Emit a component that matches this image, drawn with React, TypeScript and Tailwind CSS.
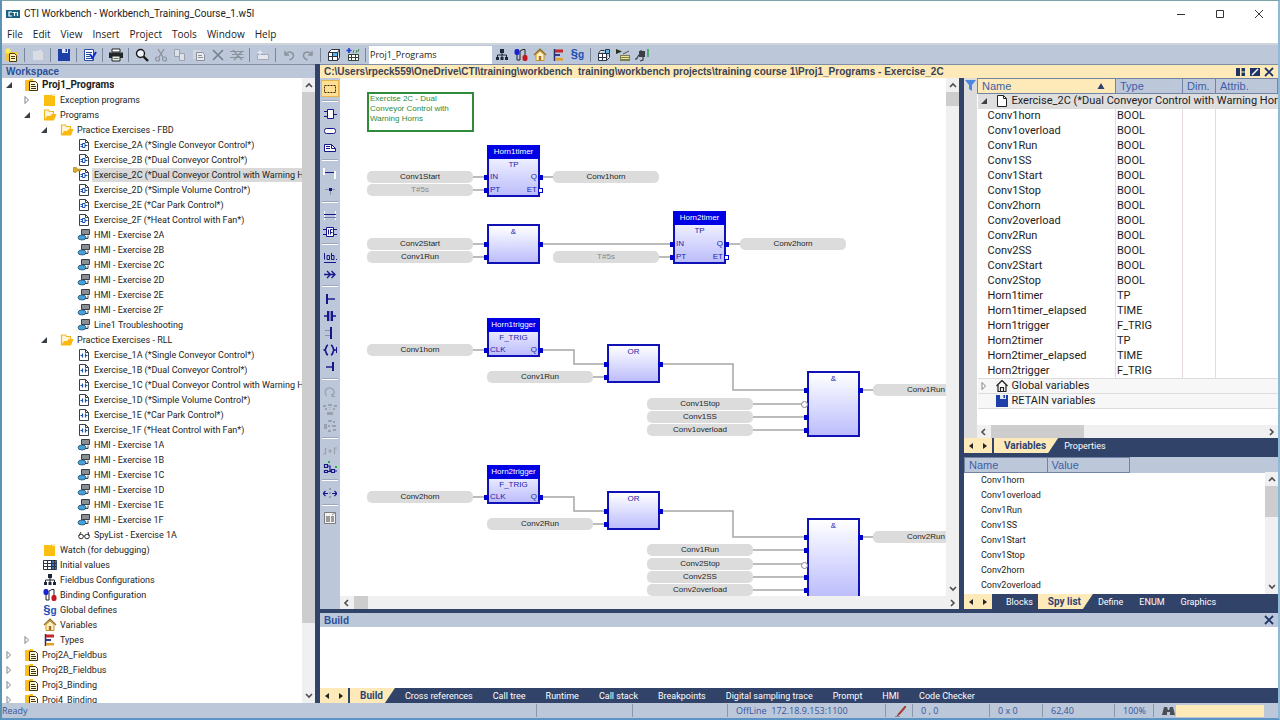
import React from "react";

type Kids = { children: React.ReactNode };

function Ico({ children, w = 14, h = 14 }: Kids & { w?: number; h?: number }) {
  return (
    <svg width={w} height={h} viewBox={`0 0 ${w} ${h}`} fill="none" aria-hidden="true" className="block shrink-0">
      {children}
    </svg>
  );
}

/* ---------- shared icons ---------- */
const FolderClosed = () => (
  <Ico><path d="M1 2h7l1-1h2v1h1v11H1z" fill="#fbbf12" /><path d="M9 1h3v2H9z" fill="#fde9a8" /></Ico>
);
const FolderOpen = () => (
  <Ico><path d="M1.5 12V2h4l1 1.5h4V6" stroke="#f3b61f" strokeWidth="1.2" fill="#fff6d8" /><path d="M1 12.5 4 8h3l2-2h4.5L11 12.5z" fill="#fbb80f" /></Ico>
);
const ProjectIcon = () => (
  <Ico>
    <path d="M0 2h4l1-1h3v2h1v10H0z" fill="#fbc01c" />
    <path d="M4.5 3.5h6l2 2v7h-8z" fill="#fff8e0" stroke="#3d3413" />
    <path d="M6 6.500h4M6 8.500h5M6 10.500h5" stroke="#3d3413" />
  </Ico>
);
const NewProjectIcon = () => (
  <Ico>
    <path d="M1 4h11v9H1z" fill="#f6c433" />
    <path d="M4.500 5.500h5l2 2v6h-7z" fill="#fff3c4" stroke="#4a3b05" />
    <path d="M6 8.500h4M6 10.500h4" stroke="#4a3b05" />
    <path d="M3 0v6M0 3h6M1 1l4 4M5 1 1 5" stroke="#fff04a" strokeWidth="1.200" />
  </Ico>
);
const Page = ({ children }: Kids) => (
  <Ico><path d="M2.500 1.500h6l3 3v8h-9z" fill="#fff" stroke="#3a4048" /><path d="M8.500 1.500v3h3" stroke="#3a4048" />{children}</Ico>
);
const FbdIcon = () => (
  <Page><path d="M5.500 5.500h2.500v4H5.500zM3.500 6.500h2M3.500 8.500h2M8 7.500h2.500" stroke="#1b4fae" /></Page>
);
const RllIcon = () => (
  <Page><path d="M3.500 7.500h2M5.500 5.500v4M8.500 5.500v4M8.500 7.500h2" stroke="#1b4fae" strokeWidth="1.200" /></Page>
);
const OpenFbdIcon = () => (
  <div className="relative">
    <FbdIcon />
    <svg width="8" height="6" viewBox="0 0 8 6" className="absolute -top-px -left-1" aria-hidden="true">
      <path d="M0 2a2 2 0 0 1 4 0h4v2H4a2 2 0 0 1-4-1z" fill="#d8ac2a" stroke="#8e6d12" strokeWidth=".5" />
    </svg>
  </div>
);
const HmiIcon = () => (
  <Ico>
    <path d="M4.500 1.500h8v5h-8z" fill="#8b8f93" stroke="#3c3f42" />
    <ellipse cx="5" cy="9.500" rx="4" ry="2.500" fill="#49a0d8" stroke="#1f5277" strokeWidth=".8" />
    <path d="M8 10.500h3V7.500" stroke="#3c3f42" />
  </Ico>
);
const GlassesIcon = () => (
  <Ico><circle cx="4" cy="8.500" r="2.300" stroke="#333" /><circle cx="10" cy="8.500" r="2.300" stroke="#333" /><path d="M6.200 8h1.600M1.800 8 4 4M12.200 8 11 4" stroke="#333" /></Ico>
);
const GridIcon = () => (
  <Ico>
    <path d="M.5 2.500h13v9H.500z" fill="#fff" stroke="#2b3340" />
    <path d="M8 3h5.500v8H8z" fill="#3b78c4" />
    <path d="M.5 5.500h13M.5 8.500h13M4.500 2.500v9M8.500 2.500v9M11.500 2.500v9" stroke="#2b3340" />
  </Ico>
);
const NetIcon = () => (
  <Ico><path d="M5 1h4v4H5zM1 9h3v3H1zM5.500 9h3v3h-3zM10 9h3v3h-3z" fill="#1d2736" /><path d="M7 5v4M2.500 9V7h9v2" stroke="#1d2736" /></Ico>
);
const BindIcon = () => (
  <Ico><path d="M3 6v6h3M6 12V3l3-1.500h2V8" stroke="#222" /><rect x=".5" y="1" width="5" height="6" rx="2" fill="#1a22d0" /><rect x="8.500" y="7" width="5" height="6" rx="2" fill="#c4161c" /></Ico>
);
const DefIcon = () => (
  <span aria-hidden="true" className="flex items-baseline font-['Liberation_Sans',sans-serif] text-[13px] leading-[14px] font-bold text-[#1c4fb4]">
    §<span className="text-[10px]">g</span>
  </span>
);
const HomeIcon = () => (
  <Ico><path d="M1 7 7 1.200 13 7" stroke="#8a6a1c" strokeWidth="1.300" /><path d="M3 6.500 7 3l4 3.500v6H3z" fill="#fff0bd" stroke="#c9952a" /><path d="M5.800 8h2.400v4.500H5.800z" fill="#a6712a" /></Ico>
);
const TypesIcon = () => (
  <Ico><path d="M2.500 1v12" stroke="#2a2f6b" strokeWidth="1.500" /><path d="M3 1.500h8v3H3z" fill="#c1272d" /><path d="M3 6h5v2H3z" fill="#3a3a8c" /><path d="M3 10h8v2.500H3z" fill="#e0a02a" /></Ico>
);
const FloppyIcon = () => (
  <Ico><path d="M1 1h12v12H1z" fill="#1f3fa8" /><path d="M5 1h6v4H5z" fill="#dfe6f5" /><path d="M8.500 1h1.500v3H8.500z" fill="#1f3fa8" /></Ico>
);

/* ---------- toolbar ---------- */
const gray = "#8c929c";
const toolbar: (null | [string, React.ReactNode])[] = [
  ["New project", <NewProjectIcon />],
  null,
  ["Open", <Ico><path d="M2 3h5l1-1h3v2h1v8H2z" fill="#d9dde3" /></Ico>],
  null,
  ["Save", <FloppyIcon />],
  null,
  ["Check", <Ico><path d="M1.500 1.500h9v11h-9z" fill="#fff" stroke="#2a4ca0" /><path d="M3 4.500h6M3 6.500h4M3 8.500h4M3 10.500h6" stroke="#2a4ca0" /><path d="m7 6 2.500 4L13 4" stroke="#1030c8" strokeWidth="2" /></Ico>],
  null,
  ["Print", <Ico><path d="M3 1h8v3H3z" fill="#fff" stroke="#222" /><path d="M0 4.500h14V10H0z" fill="#23272c" /><path d="M3 8h8v5H3z" fill="#e8ece8" stroke="#222" /><path d="M4.500 10.500h5" stroke="#5d8a5d" /></Ico>],
  null,
  ["Find", <Ico><circle cx="5.500" cy="5.500" r="4" fill="#eef4fa" stroke="#1b1b1b" strokeWidth="1.400" /><path d="m8.500 8.500 4.500 4.500" stroke="#1b1b1b" strokeWidth="2.400" /></Ico>],
  ["Cut", <Ico><path d="m4 1 5 8M10 1 5 9" stroke={gray} strokeWidth="1.300" /><circle cx="3.500" cy="11" r="2" stroke={gray} strokeWidth="1.200" /><circle cx="10.500" cy="11" r="2" stroke={gray} strokeWidth="1.200" /></Ico>],
  ["Copy", <Ico><path d="M1.500 1.500h5v7h-5zM6.500 5.500h5v7h-5z" fill="#dde2e9" stroke="#9ba2ad" /></Ico>],
  ["Paste", <Ico><path d="M1 2h8v9H1z" fill="#d3d7dd" /><path d="M4.500 4.500h6l2 2v6h-8z" fill="#e8ebef" stroke={gray} /><path d="M6 7.500h4M6 9.500h5" stroke={gray} /></Ico>],
  ["Delete", <Ico><path d="m2 2 10 10M12 2 2 12" stroke="#757c88" strokeWidth="1.500" /></Ico>],
  ["Clear all", <Ico><path d="M0 3.500h14M2 6.500h11M0 9.500h14M3 2l9 10M12 3l-8 9" stroke={gray} strokeWidth="1.200" /></Ico>],
  null,
  ["Insert item", <Ico><path d="M1.500 6.500h11v5h-11z" fill="#e4e8ee" stroke="#a3aab6" /><path d="M4 2v5M1.500 4.500h5" stroke="#eef1f5" /></Ico>],
  null,
  ["Undo", <Ico><path d="M3 3v4h4M3.500 6.500c3-4 8-2.500 8 1 0 2-1.500 3.500-4 4.500" stroke={gray} strokeWidth="1.500" /></Ico>],
  ["Redo", <Ico><path d="M11 3v4H7M10.500 6.500c-3-4-8-2.500-8 1 0 2 1.500 3.500 4 4.500" stroke={gray} strokeWidth="1.500" /></Ico>],
  null,
  ["Variables view", <Ico><path d="M1.500 4.500h9v8h-9zM1.500 8.500h9M5.500 4.500v8M1.500 4.500l3-3h8l-2 3M12.500 1.500v8l-2 3" fill="#fff" stroke="#2b3340" /><path d="M6 5h4v3H6z" fill="#55b9e8" /></Ico>],
  ["Add variables", <Ico><path d="M2.500 6.500h10v6h-10zM2.500 9.500h10M5.500 6.500v6M9.500 6.500v6" fill="#fff" stroke="#2f4236" /><path d="M3 0v5M.5 2.500h5" stroke="#1c3ad0" strokeWidth="1.600" /><path d="m7 5 1-3M10 5l1-3M12 4l1-3" stroke="#3f8a4a" /></Ico>],
  null,
];
const toolbarEnd: (null | [string, React.ReactNode])[] = [
  ["Fieldbus configurations", <NetIcon />],
  ["Binding configuration", <BindIcon />],
  ["Variables", <HomeIcon />],
  ["Types", <TypesIcon />],
  ["Global defines", <DefIcon />],
  null,
  ["Arrange", <Ico><path d="M1.500 5.500h8v7h-8zM1.500 9.500h8M5.500 5.500v7M1.500 5.500l2-3h4M9.500 12.500l3-3V6" fill="#fff" stroke="#2b3340" /><path d="M8.500 1.500h4v4h-4z" fill="#55b9e8" stroke="#2b3340" /></Ico>],
  ["Simulate", <Ico><path d="m0 1 6 2.500L0 6z" fill="#26331f" /><path d="M4 7h10v6H4z" fill="#7d7d4a" /><path d="M5 8.500h8M5 10.500h8" stroke="#ece79a" /><path d="m7 6 6-3" stroke="#555" /></Ico>],
  ["Go online", <Ico><path d="M4 3h6v6H4z" fill="#3a3f47" /><path d="M0 11c3 1 2-3 4-4M6 4v-2M8 9v3l-3 1" stroke="#3a3f47" strokeWidth="1.200" /><path d="M13 1v8" stroke="#2aa84a" strokeWidth="1.500" /></Ico>],
];

function ToolItems({ items }: { items: (null | [string, React.ReactNode])[] }) {
  return (
    <>
      {items.map((it, i) =>
        it ? (
          <button key={i} type="button" aria-label={it[0]} className="flex h-5 w-[19px] shrink-0 items-center justify-center">{it[1]}</button>
        ) : (
          <span key={i} className="mx-[3px] h-3.5 w-px shrink-0 bg-[#7a8699]" />
        )
      )}
    </>
  );
}

/* ---------- palette ---------- */
const ink = "#15158c";
const faint = "#9aa1ac";
const palette: (null | [string, React.ReactNode])[] = [
  ["Select", <Ico><path d="M1.500 3.500h11v7h-11z" stroke="#3a2d05" strokeDasharray="2 1" /></Ico>],
  null,
  ["Function block", <Ico><path d="M4.500 2.500h6v9h-6z" fill="#fff" stroke={ink} /><path d="M1 4.500h3M1 9.500h3M11 7.500h3" stroke={ink} /></Ico>],
  ["Variable", <Ico><rect x="1.500" y="4.500" width="11" height="5" rx="2" fill="#fff" stroke={ink} /></Ico>],
  ["Comment", <Ico><path d="M1.500 3.500h7l4 4v3h-11z" fill="#fff" stroke={ink} /><path d="M8.500 3.500v4h4M3 5.500h4M3 7.500h4" stroke={ink} /></Ico>],
  null,
  ["Connection", <Ico><path d="M1 2v7M12 5v8" stroke="#fff" strokeWidth="2" /><path d="M2 6.500h9" stroke={ink} /></Ico>],
  ["Corner", <Ico><path d="M2 6.500h10M7.500 6v6" stroke="#8a93a5" /><path d="M6 5h3v3H6z" fill={ink} /></Ico>],
  null,
  ["Rail", <Ico><path d="M1.500 3v9M12.500 3v9" stroke="#fff" /><path d="M1 6.500h12" stroke={ink} /><path d="M1 9.500h12" stroke="#6b74b0" /></Ico>],
  ["Inline block", <Ico><path d="M3.500 2.500h7v9h-7z" fill="#fff" stroke={ink} /><path d="M0 4.500h3M0 9.500h3M11 4.500h3M11 9.500h3M5.500 4.500v5M7.500 9.500v-5h2M7.500 7.500h2" stroke={ink} /></Ico>],
  null,
  ["Label", <Ico><path d="M1.500 3v6.500M4 5.500h2.500v4H4zM8.500 3v6.500H11v-4H9M13 9.500h1M1 12.500h12" stroke={ink} /></Ico>],
  ["Jump", <Ico><path d="M1 7.500h11M4 4l3.500 3.500L4 11M8.500 4 12 7.500 8.500 11" stroke={ink} strokeWidth="1.300" /></Ico>],
  null,
  ["Left rail", <Ico><path d="M4 2v10" stroke={ink} strokeWidth="2" /><path d="M5 7h7" stroke={ink} strokeWidth="1.400" /></Ico>],
  ["Contact", <Ico><path d="M5 2v10M9 2v10" stroke={ink} strokeWidth="2" /><path d="M1 7h3M10 7h3" stroke={ink} strokeWidth="1.500" /><path d="M7 2v10" stroke={ink} strokeWidth=".7" /></Ico>],
  ["Parallel", <Ico><path d="M8 1v12" stroke={ink} strokeWidth="2" /><path d="M2 4.500h5M2 9.500h5" stroke="#8a93a5" /></Ico>],
  ["Coil", <Ico><path d="M5 2C2 3 4 6 1.500 7 4 8 2 11 5 12M8 2c3 1 1 4 3.500 5C9 8 11 11 8 12" stroke={ink} strokeWidth="1.700" /><path d="M12 7h2M13.500 4v6" stroke={ink} /></Ico>],
  ["Right rail", <Ico><path d="M10 2v9" stroke={ink} strokeWidth="2" /><path d="M3 7h7" stroke={ink} strokeWidth="1.400" /></Ico>],
  null,
  ["Rotate", <Ico><path d="M4 11a4.500 4.500 0 1 1 5 .2M9 8.500v3h3" stroke={faint} strokeWidth="1.200" /></Ico>],
  ["Align top", <Ico><path d="M0 3h3v2H0zM5 2h4v2H5zM11 3h3v2h-3zM2 6h2v2H2zM10 6h2v2h-2zM4 10h6v3H4z" fill={faint} /><path d="M7 5v4" stroke={faint} strokeDasharray="1 1" /></Ico>],
  ["Align left", <Ico><path d="M5 1h4v2H5zM10 2h2v2h-2zM1 5h3v5H1zM5 6h2v2H5zM9 6h4v2H9zM5 11h3v2H5zM10 10h3v2h-3z" fill={faint} /></Ico>],
  null,
  ["Spacing", <Ico><path d="M2.500 4v6H0M11.500 10V4H14M5 7h4M7 5v4" stroke={faint} strokeWidth="1.200" /></Ico>],
  ["Auto layout", <Ico><path d="M1.500 3.500h3v3h-3zM1.500 9.500h3v2h-3zM8.500 8.500h3v3h-3zM5 5h2v5h1.500M5 10.500h3M12 10h2" stroke={ink} strokeWidth="1.200" /><path d="M5 0h2v2H5zM12 5h2v2h-2z" fill="#22b32f" /></Ico>],
  null,
  ["Stretch", <Ico><path d="M0 7.500h5M2.500 5 0 7.500 2.500 10M9 7.500h5M11.500 5 14 7.500 11.500 10" stroke={ink} strokeWidth="1.200" /><path d="M7 2v11" stroke="#6d7686" strokeDasharray="2 2" /></Ico>],
  null,
  ["Properties", <Ico><path d="M1.500 1.500h11v11h-11z" fill="#f2f2f2" stroke="#7d7d7d" /><path d="M3 5h4v6H3zM8 5h3v6H8z" fill="#9b9b9b" /><path d="m9 4 4-3" stroke="#888" /></Ico>],
];

/* ---------- scrollbars ---------- */
const Chev = ({ d }: { d: string }) => (
  <Ico w={12} h={12}><path d={d} stroke="#4d4d4d" strokeWidth="1.600" /></Ico>
);
const UP = "m3 8 3-3 3 3";
const DOWN = "m3 4 3 3 3-3";
const LEFT = "M7 3 4 6l3 3";
const RIGHT = "m5 3 3 3-3 3";

function VBar({ thumb }: { thumb: string }) {
  return (
    <div className="flex w-[13px] shrink-0 flex-col items-center bg-[#f0f0f0]">
      <button type="button" aria-label="Scroll up" className="py-px"><Chev d={UP} /></button>
      <div className="min-h-0 w-full flex-1"><div className={`w-full bg-[#cdcdcd] ${thumb}`} /></div>
      <button type="button" aria-label="Scroll down" className="py-px"><Chev d={DOWN} /></button>
    </div>
  );
}
function HBar({ thumb }: { thumb: string }) {
  return (
    <div className="flex h-[13px] shrink-0 items-center bg-[#f0f0f0]">
      <button type="button" aria-label="Scroll left" className="px-px"><Chev d={LEFT} /></button>
      <div className="h-full flex-1"><div className={`h-full bg-[#cdcdcd] ${thumb}`} /></div>
      <button type="button" aria-label="Scroll right" className="px-px"><Chev d={RIGHT} /></button>
    </div>
  );
}

/* ---------- project tree ---------- */
type Row = { l: 0 | 1 | 2 | 3; t: string; i: React.ReactNode; open?: boolean; bold?: boolean; sel?: boolean };
const fbd = ["A (*Single Conveyor Control*)", "B (*Dual Conveyor Control*)", "C (*Dual Conveyor Control with Warning Horns*)", "D (*Simple Volume Control*)", "E (*Car Park Control*)", "F (*Heat Control with Fan*)"];
const letters = ["A", "B", "C", "D", "E", "F"];
const rows: Row[] = [
  { l: 0, t: "Proj1_Programs", i: <ProjectIcon />, open: true, bold: true },
  { l: 1, t: "Exception programs", i: <FolderClosed />, open: false },
  { l: 1, t: "Programs", i: <FolderOpen />, open: true },
  { l: 2, t: "Practice Exercises - FBD", i: <FolderOpen />, open: true },
  ...fbd.map((s, k): Row => ({ l: 3, t: "Exercise_2" + s, i: k === 2 ? <OpenFbdIcon /> : <FbdIcon />, sel: k === 2 })),
  ...letters.map((s): Row => ({ l: 3, t: "HMI - Exercise 2" + s, i: <HmiIcon /> })),
  { l: 3, t: "Line1 Troubleshooting", i: <HmiIcon /> },
  { l: 2, t: "Practice Exercises - RLL", i: <FolderOpen />, open: true },
  ...fbd.map((s): Row => ({ l: 3, t: "Exercise_1" + s, i: <RllIcon /> })),
  ...letters.map((s): Row => ({ l: 3, t: "HMI - Exercise 1" + s, i: <HmiIcon /> })),
  { l: 3, t: "SpyList - Exercise 1A", i: <GlassesIcon /> },
  { l: 1, t: "Watch (for debugging)", i: <FolderClosed /> },
  { l: 1, t: "Initial values", i: <GridIcon /> },
  { l: 1, t: "Fieldbus Configurations", i: <NetIcon /> },
  { l: 1, t: "Binding Configuration", i: <BindIcon /> },
  { l: 1, t: "Global defines", i: <DefIcon /> },
  { l: 1, t: "Variables", i: <HomeIcon /> },
  { l: 1, t: "Types", i: <TypesIcon />, open: false },
  { l: 0, t: "Proj2A_Fieldbus", i: <ProjectIcon />, open: false },
  { l: 0, t: "Proj2B_Fieldbus", i: <ProjectIcon />, open: false },
  { l: 0, t: "Proj3_Binding", i: <ProjectIcon />, open: false },
  { l: 0, t: "Proj4_Binding", i: <ProjectIcon />, open: false },
];
const indent = ["pl-0.5", "pl-5", "pl-[37px]", "pl-[54px]"];

function Arrow({ open }: { open?: boolean }) {
  return (
    <Ico w={10} h={10}>
      {open === true && <path d="M8 2v6H2z" fill="#3a3f45" />}
      {open === false && <path d="M3 1.500 6.500 5 3 8.500z" stroke="#7c8188" fill="#fff" />}
    </Ico>
  );
}

/* ---------- diagram ---------- */
type Pin = { y: number; n?: string; neg?: boolean; hollow?: boolean };
type Block = { x: number; y: number; h: number; title?: string; kind: string; ins: Pin[]; outs: Pin[] };
const blocks: Block[] = [
  { x: 147, y: 67, h: 52, title: "Horn1timer", kind: "TP", ins: [{ y: 32, n: "IN" }, { y: 45, n: "PT" }], outs: [{ y: 32, n: "Q" }, { y: 45, n: "ET", hollow: true }] },
  { x: 147, y: 146, h: 40, kind: "&", ins: [{ y: 20 }, { y: 33 }], outs: [{ y: 20 }] },
  { x: 333, y: 133, h: 53, title: "Horn2timer", kind: "TP", ins: [{ y: 33, n: "IN" }, { y: 46, n: "PT" }], outs: [{ y: 33, n: "Q" }, { y: 46, n: "ET", hollow: true }] },
  ...[0, 147].flatMap((d, k): Block[] => [
    { x: 147, y: 240 + d, h: 39, title: `Horn${k + 1}trigger`, kind: "F_TRIG", ins: [{ y: 32, n: "CLK" }], outs: [{ y: 32, n: "Q" }] },
    { x: 267, y: 266 + d, h: 39, kind: "OR", ins: [{ y: 20 }, { y: 33 }], outs: [{ y: 20 }] },
    { x: 467, y: 293 + d, h: k ? 80 : 66, kind: "&", ins: [{ y: 19 }, { y: 32, neg: !k }, { y: 46, neg: !!k }, { y: 59 }, ...(k ? [{ y: 72 }] : [])], outs: [{ y: 19 }] },
  ]),
];
const pills: [number, number, string, boolean?][] = [
  [27, 99, "Conv1Start"], [27, 112, "T#5s", true], [213, 99, "Conv1horn"],
  [27, 166, "Conv2Start"], [27, 179, "Conv1Run"], [213, 179, "T#5s", true], [400, 166, "Conv2horn"],
  [27, 272, "Conv1horn"], [147, 299, "Conv1Run"], [307, 326, "Conv1Stop"], [307, 339, "Conv1SS"], [307, 352, "Conv1overload"], [533, 312, "Conv1Run"],
  [27, 419, "Conv2horn"], [147, 446, "Conv2Run"], [307, 472, "Conv1Run"], [307, 486, "Conv2Stop"], [307, 499, "Conv2SS"], [307, 512, "Conv2overload"], [533, 459, "Conv2Run"],
];
const wires = [
  "M133 99h12M133 112h12M203 99h11M133 166h12M133 179h12M203 166h128M319 179h12M389 166h12",
  "M133 272h12M203 272h31v14h31M253 299h12M323 286h70v26h72M413 326h50M413 339h52M413 352h52M523 312h12",
  "M133 419h12M203 419h31v14h31M253 446h12M323 433h70v26h72M413 472h52M413 486h50M413 499h52M413 512h52M523 459h12",
];

function Diagram() {
  return (
    <div className="relative min-w-0 flex-1 overflow-hidden bg-white font-['Liberation_Sans',sans-serif] text-[8px] leading-[12px]">
      <svg className="absolute top-0 left-0" width="700" height="560" viewBox="0 0 700 560" fill="none" aria-hidden="true">
        {wires.map((d) => <path key={d} d={d} stroke="#a6a6a6" strokeWidth="1.500" />)}
      </svg>
      <div className="absolute top-[14px] left-[27px] w-[107px] border-2 border-[#2e8b3a] pr-5 pb-1.5 pl-px leading-[10px] text-[#2e8b3a]">
        Exercise 2C - Dual Conveyor Control with Warning Horns
      </div>
      {pills.map(([x, y, t, dim], i) => (
        <div key={i} style={{ left: x, top: y - 6 }} className={`absolute w-[106px] rounded-[5px] bg-[#dcdcdc] text-center ${dim ? "text-[#888]" : "text-[#1c1c1c]"}`}>{t}</div>
      ))}
      {blocks.map((b, i) => (
        <div key={i} style={{ left: b.x, top: b.y, height: b.h }} className="absolute w-[53px] border-2 border-[#1111b8] bg-linear-to-b from-white to-[#bdbdfb] text-center text-[#2323a8]">
          {b.title && <div className="-mx-0.5 -mt-0.5 bg-[#0000e4] py-px text-white">{b.title}</div>}
          <div>{b.kind}</div>
          {b.ins.map((p) => (
            <React.Fragment key={p.y}>
              <span style={{ top: p.y - 4 }} className={p.neg ? "absolute -left-2 size-[7px] rounded-full border border-[#888] bg-white" : "absolute -left-[5px] size-[5px] bg-[#0000cc]"} />
              {p.n && <span style={{ top: p.y - 8 }} className="absolute left-px">{p.n}</span>}
            </React.Fragment>
          ))}
          {b.outs.map((p) => (
            <React.Fragment key={p.y}>
              <span style={{ top: p.y - 4 }} className={p.hollow ? "absolute -right-[5px] size-[5px] border border-[#0000cc] bg-white" : "absolute -right-[5px] size-[5px] bg-[#0000cc]"} />
              {p.n && <span style={{ top: p.y - 8 }} className="absolute right-px">{p.n}</span>}
            </React.Fragment>
          ))}
        </div>
      ))}
    </div>
  );
}

/* ---------- tabs ---------- */
function Tabs({ items, active, pad }: { items: string[]; active: string; pad: string }) {
  return (
    <div className="flex h-[15px] shrink-0 items-stretch bg-[#32436a] font-['Roboto',sans-serif] text-[9px] leading-[14px] text-white">
      <div className="mr-0.5 flex w-7 items-center justify-around bg-[#fdeab8]">
        <button type="button" aria-label="Previous tab"><Ico w={6} h={8}><path d="M5 1v6L1 4z" fill="#222" /></Ico></button>
        <button type="button" aria-label="Next tab"><Ico w={6} h={8}><path d="M1 1v6l4-3z" fill="#222" /></Ico></button>
      </div>
      <div role="tablist" className="flex">
        {items.map((t) => (
          <button
            key={t}
            type="button"
            role="tab"
            aria-selected={t === active}
            className={t === active ? "bg-[#fdeab8] pr-3 pl-2.5 text-[10px] font-bold text-[#2d4273] [clip-path:polygon(0_0,100%_0,calc(100%-10px)_100%,0_100%)] not-first:-mx-[3px]" : `first:pl-3 ${pad}`}
          >
            {t}
          </button>
        ))}
      </div>
    </div>
  );
}

/* ---------- variables ---------- */
const vars: [string, string][] = [
  ["Conv1horn", "BOOL"], ["Conv1overload", "BOOL"], ["Conv1Run", "BOOL"], ["Conv1SS", "BOOL"], ["Conv1Start", "BOOL"], ["Conv1Stop", "BOOL"],
  ["Conv2horn", "BOOL"], ["Conv2overload", "BOOL"], ["Conv2Run", "BOOL"], ["Conv2SS", "BOOL"], ["Conv2Start", "BOOL"], ["Conv2Stop", "BOOL"],
  ["Horn1timer", "TP"], ["Horn1timer_elapsed", "TIME"], ["Horn1trigger", "F_TRIG"], ["Horn2timer", "TP"], ["Horn2timer_elapsed", "TIME"], ["Horn2trigger", "F_TRIG"],
];
const spy = vars.slice(0, 8).map((v) => v[0]);
const cell = "h-[15px] border-r border-[#e6dada] p-0 leading-[14px]";
const head = "h-[15px] border border-[#7184a6] p-0 pl-1 text-left font-normal leading-[13px] text-[#3c5fa8] font-['Liberation_Sans',sans-serif]";

function GroupRow({ icon, open, text, tone }: { icon: React.ReactNode; open?: boolean; text: string; tone: string }) {
  return (
    <tr>
      <td colSpan={4} className={`h-[15px] border-y border-[#dcdcdc] p-0 ${tone}`}>
        <div className="flex h-[13px] items-center overflow-hidden pl-px whitespace-nowrap">
          <span className="w-4 shrink-0"><Arrow open={open} /></span>
          {icon}
          <span className="ml-[3px] shrink-0">{text}</span>
        </div>
      </td>
    </tr>
  );
}

function VariablesPanel() {
  return (
    <div className="flex min-h-0 flex-1 bg-[#dcdcdc]">
      <div className="w-[13px] shrink-0">
        <Ico w={13} h={13}><path d="M1 2h11L8 7v6L5 11V7z" fill="#4b86e0" /></Ico>
      </div>
      <div className="flex min-w-0 flex-1 flex-col bg-white">
        <div className="min-h-0 flex-1 overflow-hidden">
          <table className="w-full table-fixed border-collapse font-['Roboto',sans-serif] text-[11px] text-[#1d1d1d]">
            <colgroup><col className="w-[138px]" /><col className="w-[67px]" /><col className="w-[33px]" /><col /></colgroup>
            <thead className="bg-[#bcc7d9] text-[11px]">
              <tr>
                <th className={`${head} bg-[#fdeab8]`}>
                  <div className="flex items-center justify-between pr-2.5">Name<Ico w={8} h={8}><path d="M4 1l3.500 6h-7z" fill="#2d4273" /></Ico></div>
                </th>
                <th className={head}>Type</th><th className={head}>Dim.</th><th className={head}>Attrib.</th>
              </tr>
            </thead>
            <tbody>
              <GroupRow open tone="bg-[#dedede]" text="Exercise_2C (*Dual Conveyor Control with Warning Horns*)" icon={<Ico><path d="M2.500 1.500h6l3 3v8h-9z" fill="#fff" stroke="#222" /><path d="M8.500 1.500v3h3" stroke="#222" /></Ico>} />
              {vars.map(([n, t]) => (
                <tr key={n}><td className={`${cell} pl-2.5`}>{n}</td><td className={`${cell} pl-px`}>{t}</td><td className={cell} /><td className="p-0" /></tr>
              ))}
              <GroupRow open={false} tone="bg-[#f7f7f7]" text="Global variables" icon={<Ico><path d="M1.500 7 7 1.500 12.500 7" stroke="#222" strokeWidth="1.300" /><path d="M3 6v6.500h8V6M5.500 12V8.500h3V12" stroke="#222" strokeWidth="1.200" /></Ico>} />
              <GroupRow tone="bg-[#f7f7f7]" text="RETAIN variables" icon={<FloppyIcon />} />
            </tbody>
          </table>
        </div>
        <HBar thumb="w-[34%]" />
      </div>
    </div>
  );
}

function SpyPanel() {
  return (
    <div className="flex h-[137px] shrink-0 bg-white">
      <div className="flex min-w-0 flex-1 flex-col">
        <div className="-mr-[13px] bg-[#bcc7d9]">
          <table className="w-[166px] table-fixed border-collapse text-[11px]">
            <thead><tr><th className={head}>Name</th><th className={head}>Value</th></tr></thead>
          </table>
        </div>
        <ul className="font-['Roboto',sans-serif] text-[9px] leading-[15px] text-[#1d1d1d]">
          {spy.map((s) => <li key={s} className="pl-[17px]">{s}</li>)}
        </ul>
      </div>
      <div className="flex pt-[15px]"><VBar thumb="h-[31px]" /></div>
    </div>
  );
}

const menus = ["File", "Edit", "View", "Insert", "Project", "Tools", "Window", "Help"];
const closeX = <Ico w={10} h={10}><path d="m1 1 8 8M9 1 1 9" stroke="#1d3468" strokeWidth="1.800" /></Ico>;
const stat = "flex h-[13px] shrink-0 items-center border-l border-[#8a97ad] pl-2 whitespace-pre";

export default function App() {
  return (
    <div className="flex h-screen flex-col overflow-hidden border-x-2 border-t border-b-2 border-t-[#7aa3ab] border-r-[#8fb9d6] border-b-[#5b94c4] border-l-[#5b93b4] bg-white">
      <header>
        <div className="flex h-[25px] items-center pl-1">
          <svg width="14" height="10" viewBox="0 0 14 10" aria-hidden="true">
            <path d="M0 1h14v8H0z" fill="#17607f" />
            <path d="M6 3H3v4h3M6.500 3.500h4M8.500 3v4M11.500 3v4" stroke="#fff" strokeWidth="1.200" fill="none" />
          </svg>
          <h1 className="ml-1 flex-1 font-['Roboto',sans-serif] text-[10px] text-[#222]">CTI Workbench - Workbench_Training_Course_1.w5l</h1>
          <button type="button" aria-label="Minimize" className="flex w-[39px] justify-center"><Ico w={10} h={10}><path d="M1 5.500h8" stroke="#333" /></Ico></button>
          <button type="button" aria-label="Maximize" className="flex w-[39px] justify-center"><Ico w={10} h={10}><path d="M1.500 1.500h7v7h-7z" stroke="#333" /></Ico></button>
          <button type="button" aria-label="Close" className="flex w-[39px] justify-center"><Ico w={10} h={10}><path d="m1 1 8 8M9 1 1 9" stroke="#333" /></Ico></button>
        </div>
        <nav className="flex h-[17px] items-center gap-2.5 pl-[5px] font-['Open_Sans',sans-serif] text-[10px] text-[#222]">
          {menus.map((m) => <button key={m} type="button">{m}</button>)}
        </nav>
        <div className="flex h-[21px] items-center border-t-2 border-[#cfd3da] bg-[#bcc7d9]">
          <ToolItems items={toolbar} />
          <input aria-label="Project" defaultValue="Proj1_Programs" className="h-[18px] w-[123px] bg-white px-px font-['Open_Sans',sans-serif] text-[9px] text-[#222]" />
          <ToolItems items={toolbarEnd} />
        </div>
      </header>

      <div className="flex min-h-0 flex-1 bg-[#32436a]">
        <aside className="mr-[5px] flex w-[313px] shrink-0 flex-col">
          <h2 className="h-3.5 shrink-0 border-t border-[#7f8da5] bg-[#bcc7d9] pl-1 font-['Liberation_Sans',sans-serif] text-[10px] leading-[13px] font-bold text-[#2b509a]">Workspace</h2>
          <div className="flex min-h-0 flex-1 bg-white">
            <ul role="tree" aria-label="Workspace" className="min-w-0 flex-1 overflow-hidden font-['Roboto',sans-serif] text-[9px] leading-[14px] text-[#1d1d1d]">
              {rows.map((r, i) => (
                <li key={i} role="treeitem" aria-selected={!!r.sel} aria-expanded={r.open} className={`flex h-[15px] items-start ${indent[r.l]}`}>
                  <span className="w-5 shrink-0 pt-0.5"><Arrow open={r.open} /></span>
                  <span className="flex w-4 shrink-0 justify-center">{r.i}</span>
                  <span className={`min-w-0 overflow-hidden pl-0.5 whitespace-nowrap ${r.bold ? "text-[10px] font-bold" : ""} ${r.sel ? "flex-1 bg-[#d9d9d9]" : ""}`}>{r.t}</span>
                </li>
              ))}
            </ul>
            <VBar thumb="h-[89%]" />
          </div>
        </aside>

        <main className="flex min-w-0 flex-1 flex-col">
          <div className="flex h-3.5 shrink-0 items-center border-t border-[#7f8da5] bg-[#fdeab8] pr-1 pl-1">
            <h2 className="min-w-0 flex-1 overflow-hidden font-['Liberation_Sans',sans-serif] text-[10px] leading-[13px] font-bold whitespace-pre text-[#3a4256]">
              {"C:\\Users\\rpeck559\\OneDrive\\CTI\\training\\workbench  training\\workbench projects\\training course 1\\Proj1_Programs - Exercise_2C"}
            </h2>
            <div className="flex gap-1">
              <button type="button" aria-label="Split"><Ico w={10} h={10}><path d="M0 1h4v8H0zM5.500 1H9v3.500H5.500zM5.500 5.500H9V9H5.500z" fill="#1d3468" /></Ico></button>
              <button type="button" aria-label="Float"><Ico w={10} h={10}><path d="M0 1h10v8H0z" fill="#1d3468" /><path d="m2 8 6-6" stroke="#fff" strokeWidth="1.500" /></Ico></button>
              <button type="button" aria-label="Close editor">{closeX}</button>
            </div>
          </div>

          <div className="flex min-h-0 flex-1">
            <section className="flex min-w-0 flex-1">
              <div role="toolbar" aria-label="Diagram tools" className="flex w-5 shrink-0 flex-col items-center bg-[#bcc7d9] pt-0.5">
                {palette.map((p, i) =>
                  p ? (
                    <button key={i} type="button" aria-label={p[0]} className="flex h-[17px] w-[18px] shrink-0 items-center justify-center first:border first:border-[#e5b650] first:bg-[#ffdf94]">{p[1]}</button>
                  ) : (
                    <span key={i} className="my-[3px] h-0.5 w-4 shrink-0 border-t border-t-[#9aa7bd] bg-white" />
                  )
                )}
              </div>
              <div className="flex min-w-0 flex-1 flex-col">
                <div className="flex min-h-0 flex-1">
                  <Diagram />
                  <VBar thumb="h-3.5" />
                </div>
                <HBar thumb="w-3.5" />
              </div>
            </section>

            <section className="ml-[5px] flex w-[314px] shrink-0 flex-col">
              <VariablesPanel />
              <Tabs items={["Variables", "Properties"]} active="Variables" pad="px-1.5" />
              <div className="h-1 shrink-0" />
              <SpyPanel />
              <Tabs items={["Blocks", "Spy list", "Define", "ENUM", "Graphics"]} active="Spy list" pad="px-2" />
            </section>
          </div>

          <section className="mt-1 flex h-[90px] shrink-0 flex-col">
            <div className="flex h-3.5 shrink-0 items-center justify-between bg-[#bcc7d9] px-1">
              <h2 className="font-['Liberation_Sans',sans-serif] text-[10px] font-bold text-[#2b509a]">Build</h2>
              <button type="button" aria-label="Close build output">{closeX}</button>
            </div>
            <div className="flex-1 bg-white" />
            <Tabs items={["Build", "Cross references", "Call tree", "Runtime", "Call stack", "Breakpoints", "Digital sampling trace", "Prompt", "HMI", "Code Checker"]} active="Build" pad="px-2.5" />
          </section>
        </main>
      </div>

      <footer className="flex h-[15px] shrink-0 items-center bg-[#bcc7d9] font-['Open_Sans',sans-serif] text-[9px] text-[#34559c]">
        <span className="flex-1">Ready</span>
        <span className={`${stat} w-24`} />
        <span className={`${stat} w-[95px]`} />
        <span className={`${stat} w-[158px]`}>OffLine  172.18.9.153:1100</span>
        <span className={`${stat} w-[27px]`}><Ico w={12} h={12}><path d="M11 1 5 8l-2 3 3-2 6-7z" fill="#c43a2c" stroke="#7a2118" strokeWidth=".6" /><path d="M1 11.500h5" stroke="#888" /></Ico></span>
        <span className={`${stat} w-[77px]`}>0 , 0</span>
        <span className={`${stat} w-[53px]`}>0 x 0</span>
        <span className={`${stat} w-[72px]`}>62,40</span>
        <span className={`${stat} w-[39px]`}>100%</span>
        <label className={`${stat} w-[125px]`}>
          <Ico w={13} h={12}><path d="M2 2h3l1 3h1l1-3h3l2 8H8V7H5v3H0z" fill="#4b4f55" /></Ico>
          <input aria-label="Search" className="ml-px h-3 w-[88px] bg-[#fdeab8]" />
        </label>
      </footer>
    </div>
  );
}
